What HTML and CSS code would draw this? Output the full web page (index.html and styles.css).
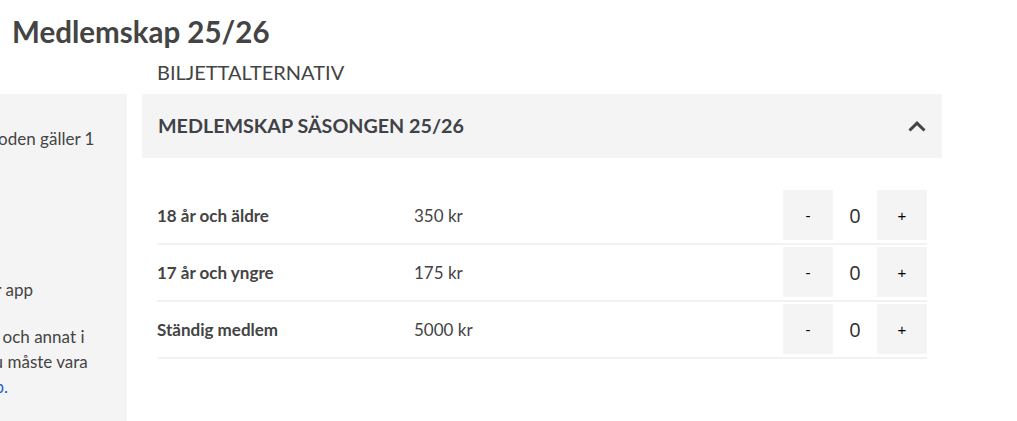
FILE: index.html
```html
<!DOCTYPE html>
<html lang="sv">
<head>
<meta charset="utf-8">
<title>Medlemskap 25/26</title>
<link rel="stylesheet" href="styles.css">
</head>
<body>
<header class="page-head">
  <h1 class="page-title">Medlemskap 25/26</h1>
</header>
<div class="layout">
  <aside class="sidebar">
    <div class="sidebar-inner">
      <p class="side-p side-p-first">Medlemsperioden gäller 1<br>säsong.</p>
      <p class="side-p side-p-app">Ladda ner vår app</p>
      <p class="side-p">Se matchinfo och annat i<br>vår app, så du måste vara<br>inloggad i <a class="side-link" href="#">app.</a></p>
    </div>
  </aside>
  <h2 class="section-label">BILJETTALTERNATIV</h2>
  <section class="accordion">
    <div class="acc-head">
      <span class="acc-title">MEDLEMSKAP SÄSONGEN 25/26</span>
      <svg class="chevron" width="18" height="11" viewBox="0 0 18 11" aria-hidden="true"><polyline points="1.5,9.5 9,2.2 16.5,9.5" fill="none" stroke="#444" stroke-width="3"/></svg>
    </div>
    <div class="acc-body">
      <div class="ticket-row">
        <span class="ticket-name">18 år och äldre</span>
        <span class="ticket-price">350 kr</span>
        <div class="qty">
          <button class="qty-btn" type="button">-</button>
          <span class="qty-val">0</span>
          <button class="qty-btn" type="button">+</button>
        </div>
      </div>
      <div class="ticket-row">
        <span class="ticket-name">17 år och yngre</span>
        <span class="ticket-price">175 kr</span>
        <div class="qty">
          <button class="qty-btn" type="button">-</button>
          <span class="qty-val">0</span>
          <button class="qty-btn" type="button">+</button>
        </div>
      </div>
      <div class="ticket-row">
        <span class="ticket-name">Ständig medlem</span>
        <span class="ticket-price">5000 kr</span>
        <div class="qty">
          <button class="qty-btn" type="button">-</button>
          <span class="qty-val">0</span>
          <button class="qty-btn" type="button">+</button>
        </div>
      </div>
    </div>
  </section>
</div>
</body>
</html>
```

FILE: styles.css
```css
html, body {
  margin: 0;
  padding: 0;
  background: #fff;
}
body {
  font-family: Lato, "Open Sans", Arial, sans-serif;
  color: #444;
  overflow: hidden;
}
.page-head {
  padding: 14px 12px 0;
}
.page-title {
  margin: 0;
  font-size: 29.5px;
  line-height: 36px;
  font-weight: 700;
  color: #444;
}
.layout {
  display: grid;
  grid-template-columns: 127px 800px;
  grid-template-rows: auto 1fr;
  column-gap: 15px;
  margin-top: 10px;
  min-height: 351px;
}
.sidebar {
  grid-column: 1;
  grid-row: 2;
  background: #f4f4f4;
  overflow: hidden;
}
.sidebar-inner {
  margin-left: -99px;
  padding: 32px 0 0 0;
  font-size: 17px;
  line-height: 25px;
  white-space: nowrap;
}
.side-p {
  margin: 0 0 22px;
}
.side-p-first {
  margin-bottom: 101px;
}
.side-link {
  color: #2563c9;
  text-decoration: none;
}
.section-label {
  grid-column: 2;
  grid-row: 1;
  margin: 0 0 10px 15px;
  font-size: 20px;
  line-height: 24px;
  font-weight: 400;
  color: #444;
}
.accordion {
  grid-column: 2;
  grid-row: 2;
}
.acc-head {
  display: flex;
  align-items: center;
  justify-content: space-between;
  background: #f4f4f4;
  padding: 20px 16px;
}
.acc-title {
  font-size: 19.7px;
  line-height: 24px;
  font-weight: 700;
  color: #3f4247;
}
.chevron {
  display: block;
}
.acc-body {
  padding: 30px 15px 0;
}
.ticket-row {
  display: flex;
  align-items: center;
  padding: 2px 0 3px;
  border-bottom: 2px solid #f2f2f2;
}
.ticket-name {
  width: 257px;
  font-size: 17px;
  font-weight: 700;
}
.ticket-price {
  flex: 1;
  font-size: 17px;
}
.qty {
  display: flex;
  align-items: center;
}
.qty-btn {
  width: 50px;
  height: 50px;
  border: 0;
  padding: 0;
  margin: 0;
  background: #f4f4f4;
  color: #000;
  font-family: "Liberation Sans", Arial, sans-serif;
  font-size: 15px;
}
.qty-val {
  width: 44px;
  text-align: center;
  font-family: "Open Sans", sans-serif;
  font-size: 20px;
  color: #2e2e2e;
}
```
